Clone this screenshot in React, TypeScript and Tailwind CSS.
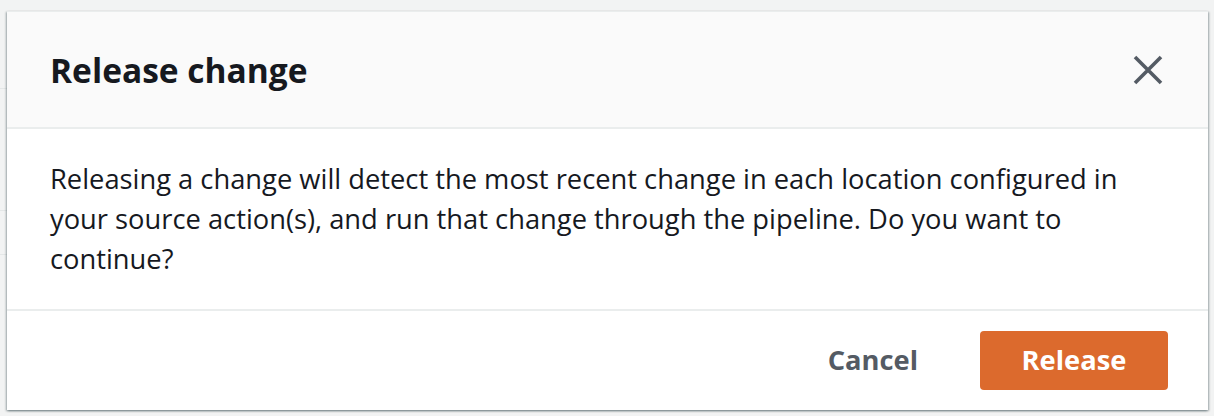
export default function App() {
  return (
    <div className="relative h-[416px] w-[1214px] overflow-hidden bg-[#f2f3f3] pl-[7px] pt-[11px] font-['Open_Sans',sans-serif]">
      {/* page behind the modal */}
      <div className="absolute left-0 top-[88px] h-px w-[7px] bg-[#e4e7e7]" />
      <div className="absolute left-0 top-[210px] h-px w-[7px] bg-[#e4e7e7]" />
      <div className="absolute left-0 top-[254px] h-px w-[7px] bg-[#e4e7e7]" />

      <div className="relative flex h-[399px] w-[1201px] flex-col border-t border-[#eaeded] bg-white shadow-[-1px_1px_2px_rgba(0,28,36,0.35),1px_1px_2px_rgba(0,28,36,0.35)]">
        <div className="flex h-[117px] shrink-0 items-center justify-between border-b-2 border-[#eaeded] bg-[#fafafa] pl-[43px] pr-[44px]">
          <h2 className="text-[33.5px] font-bold leading-[44px] text-[#16191f]">Release change</h2>
          <button type="button" className="flex h-[32px] w-[32px] items-center justify-center text-[#545b64]">
            <svg width="32" height="32" viewBox="0 0 32 32" fill="none" stroke="currentColor" strokeWidth="3.6">
              <path d="M3 3 29 29M29 3 3 29" />
            </svg>
          </button>
        </div>

        <div className="border-b-2 border-[#eaeded] pb-[30px] pl-[43px] pr-[40px] pt-[30px]">
          <p className="text-[27.3px] leading-[40px] text-[#16191f]">
            Releasing a change will detect the most recent change in each location configured in your source
            action(s), and run that change through the pipeline. Do you want to continue?
          </p>
        </div>

        <div className="flex flex-1 items-center justify-end gap-[62px] pr-[40px]">
          <button type="button" className="text-[27.3px] font-bold text-[#545b64]">
            Cancel
          </button>
          <button
            type="button"
            className="flex h-[59px] w-[188px] items-center justify-center rounded-[4px] bg-[#dc6a2d] text-[27.3px] font-bold text-white"
          >
            Release
          </button>
        </div>
      </div>
    </div>
  );
}
